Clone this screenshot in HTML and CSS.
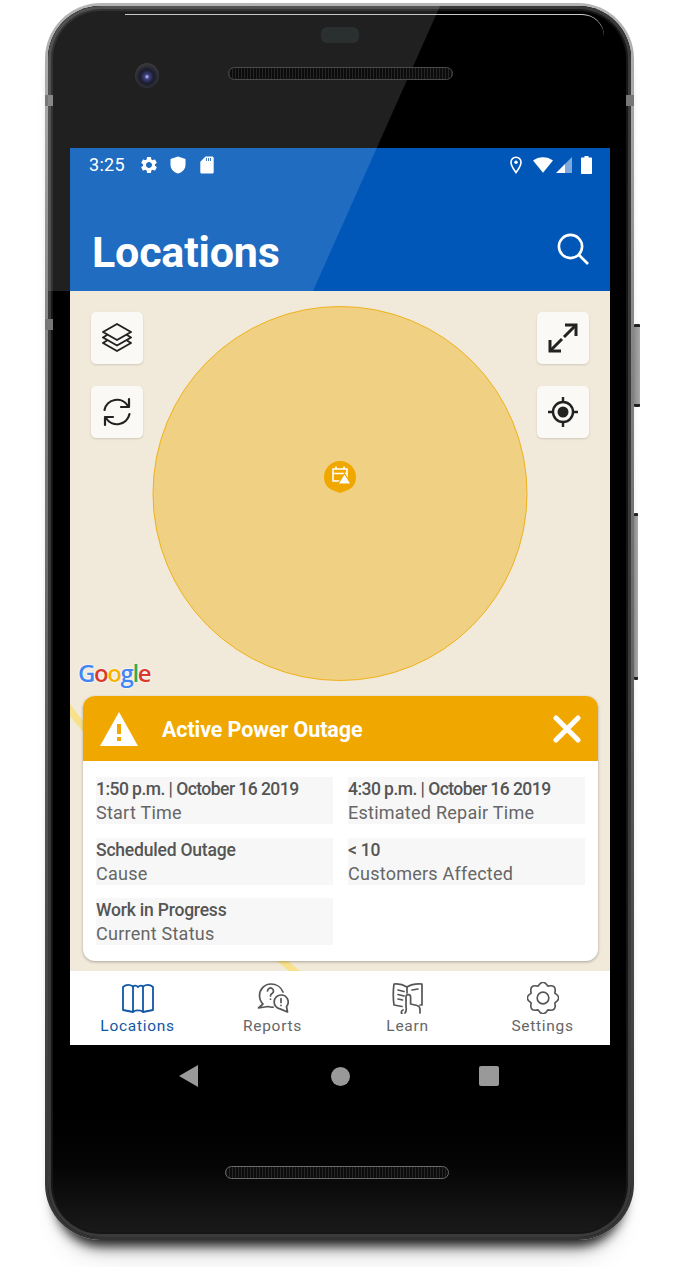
FILE: index.html
```html
<!DOCTYPE html>
<html lang="en">
<head>
  <meta charset="UTF-8">
  <title>Locations</title>
  <link rel="stylesheet" href="styles.css">
</head>
<body>
  <div class="phone">
    <span class="rocker rocker-volume"></span>
    <span class="rocker rocker-power"></span>
    <span class="band band-left"></span>
    <span class="band band-left-low"></span>
    <span class="band band-right"></span>
    <div class="glare"></div>
    <div class="top-line"></div>

    <div class="bezel-top">
      <div class="sensor"></div>
      <div class="bezel-row">
        <div class="camera"></div>
        <div class="speaker speaker-top"></div>
      </div>
    </div>

    <div class="screen">
      <div class="status">
        <span class="clock">3:25</span>
        <svg class="st-gear" viewBox="0 0 24 24"><path fill="#fff" d="M19.14 12.94c.04-.3.06-.61.06-.94 0-.32-.02-.64-.07-.94l2.03-1.58c.18-.14.23-.41.12-.61l-1.92-3.32c-.12-.22-.37-.29-.59-.22l-2.39.96c-.5-.38-1.03-.7-1.62-.94l-.36-2.54c-.04-.24-.24-.41-.48-.41h-3.84c-.24 0-.43.17-.47.41l-.36 2.54c-.59.24-1.13.57-1.62.94l-2.39-.96c-.22-.08-.47 0-.59.22L2.74 8.87c-.12.21-.08.47.12.61l2.03 1.58c-.05.3-.09.63-.09.94s.02.64.07.94l-2.03 1.58c-.18.14-.23.41-.12.61l1.92 3.32c.12.22.37.29.59.22l2.39-.96c.5.38 1.03.7 1.62.94l.36 2.54c.05.24.24.41.48.41h3.84c.24 0 .44-.17.47-.41l.36-2.54c.59-.24 1.13-.56 1.62-.94l2.39.96c.22.08.47 0 .59-.22l1.92-3.32c.12-.22.07-.47-.12-.61l-2.01-1.58zM12 15.6c-1.98 0-3.6-1.62-3.6-3.6s1.62-3.6 3.6-3.6 3.6 1.62 3.6 3.6-1.62 3.6-3.6 3.6z"/></svg>
        <svg class="st-shield" viewBox="0 0 16 18"><path fill="#fff" d="M8 0.5 L15.5 3 V8.5 C15.5 13 12.5 16.3 8 17.5 C3.5 16.3 0.5 13 0.5 8.5 V3 Z"/></svg>
        <svg class="st-sd" viewBox="0 0 14 18"><path fill="#fff" d="M5.5 0.5 H12 C13 0.5 13.7 1.2 13.7 2.2 V16 C13.7 17 13 17.6 12 17.6 H2 C1 17.6 0.3 17 0.3 16 V5.7 Z"/><path stroke="#1f6bc0" stroke-width="1" d="M6.5 2 V5 M8.5 2 V5 M10.5 2 V5"/></svg>
        <div class="status-right">
          <svg class="st-pin" viewBox="0 0 12 18"><path fill="none" stroke="#fff" stroke-width="1.6" d="M6 16.6 C3.5 13 1 10 1 6.2 A5 5 0 0 1 11 6.2 C11 10 8.5 13 6 16.6 Z"/><circle cx="6" cy="6.2" r="1.7" fill="#fff"/></svg>
          <svg class="st-wifi" viewBox="0 0 20 16"><path fill="#fff" d="M0 3.6 C5.6 -1 14.4 -1 20 3.6 L10 15.8 Z"/></svg>
          <svg class="st-signal" viewBox="0 0 16 16"><path fill="#fff" d="M0 16 L9 7 V16 Z"/><path fill="#7da9dc" d="M9 7 L16 0 V16 H9 Z"/></svg>
          <svg class="st-battery" viewBox="0 0 11 18"><path fill="#fff" d="M3.5 0 H7.5 V1.6 H10 C10.6 1.6 11 2 11 2.6 V17 C11 17.6 10.6 18 10 18 H1 C.4 18 0 17.6 0 17 V2.6 C0 2 .4 1.6 1 1.6 H3.5 Z"/></svg>
        </div>
      </div>

      <div class="appbar">
        <h1 class="title">Locations</h1>
        <svg class="search" viewBox="0 0 32 32" fill="none" stroke="#fff" stroke-width="2.6"><circle cx="13.5" cy="13.5" r="11.6"/><path d="M22 22 L31 31"/></svg>
      </div>

      <div class="map">
        <svg class="map-art" viewBox="0 0 540 680">
          <path fill="#f7e18a" d="M0 413 L13 430 V441 L0 425 Z"/>
          <path fill="#f7e18a" d="M207 670 H218 L230 680 H219 Z"/>
          <circle cx="270" cy="202.500" r="187" fill="#f0d082" stroke="#eeb21c" stroke-width="1"/>
          <path fill="#f0a800" d="M270 202 L262 199 C256 196 254 191 254 186 A16 16 0 0 1 286 186 C286 191 284 196 278 199 Z"/>
          <path fill="none" stroke="#fff" stroke-width="1.6" d="M263 178 H277 V190 H263 Z M263 182.500 H277 M266 175.500 V178 M274 175.500 V178"/>
          <path fill="#fff" stroke="#f0a800" stroke-width="1.2" d="M274.500 182.500 L281 193 H268 Z"/>
        </svg>

        <div class="map-tools">
          <div class="tool-col">
            <button class="tool">
              <svg viewBox="0 0 32 32" fill="none" stroke="#222" stroke-width="2" stroke-linejoin="round" stroke-linecap="round"><path d="M16 2 L30 10 L16 18 L2 10 Z"/><path d="M6 13 L2 15.500 L16 23.500 L30 15.500 L26 13"/><path d="M6 18.500 L2 21 L16 29 L30 21 L26 18.500"/></svg>
            </button>
            <button class="tool">
              <svg viewBox="0 0 32 32" fill="none" stroke="#222" stroke-width="2.200" stroke-linecap="round" stroke-linejoin="round"><path d="M3.500 14 A12.800 12.800 0 0 1 27 10"/><path d="M28 3 V11 H20"/><path d="M28.500 18 A12.800 12.800 0 0 1 5 22"/><path d="M4 29 V21 H12"/></svg>
            </button>
          </div>
          <div class="tool-col">
            <button class="tool">
              <svg viewBox="0 0 32 32" fill="none" stroke="#222" stroke-width="3"><path d="M18 3 H29 V14"/><path d="M29 3 L17 15"/><path d="M14 29 H3 V18"/><path d="M3 29 L15 17"/></svg>
            </button>
            <button class="tool">
              <svg viewBox="0 0 32 32" fill="none" stroke="#222" stroke-width="2.400"><circle cx="16" cy="16" r="10"/><circle cx="16" cy="16" r="5.500" fill="#222" stroke="none"/><path d="M16 1 V6 M16 26 V31 M1 16 H6 M26 16 H31"/></svg>
            </button>
          </div>
        </div>

        <div class="google"><span class="g-blue">G</span><span class="g-red">o</span><span class="g-yellow">o</span><span class="g-blue">g</span><span class="g-green">l</span><span class="g-red">e</span></div>

        <div class="card">
          <div class="card-head">
            <svg class="warn" viewBox="0 0 38 34"><path fill="#fff" d="M19 0 L38 34 H0 Z"/><path fill="#f0a800" d="M17 12 H21 V22 H17 Z M17 25 H21 V29 H17 Z"/></svg>
            <span class="card-title">Active Power Outage</span>
            <svg class="close" viewBox="0 0 28 28" fill="none" stroke="#fff" stroke-width="5" stroke-linecap="round"><path d="M3 3 L25 25 M25 3 L3 25"/></svg>
          </div>
          <div class="card-body">
            <div class="cell cell-date"><b>1:50 p.m. | October 16 2019</b><span>Start Time</span></div>
            <div class="cell cell-date"><b>4:30 p.m. | October 16 2019</b><span>Estimated Repair Time</span></div>
            <div class="cell"><b>Scheduled Outage</b><span>Cause</span></div>
            <div class="cell"><b>&lt; 10</b><span>Customers Affected</span></div>
            <div class="cell"><b>Work in Progress</b><span>Current Status</span></div>
          </div>
        </div>
      </div>

      <div class="tabs">
        <div class="tab active">
          <svg viewBox="0 0 32 32" fill="none" stroke="#0f57a5" stroke-width="1.800" stroke-linejoin="round"><path d="M1 5 C4 2.500 8 2.500 11 4.500 C13 3 14.500 3.500 16 5 C17.500 3.500 19 3 21 4.500 C24 2.500 28 2.500 31 5 V28 L21 30 C19 28.500 17.500 28 16 28.500 C14.500 28 13 28.500 11 30 L1 28 Z"/><path d="M11 4.500 V30 M21 4.500 V30"/></svg>
          <span>Locations</span>
        </div>
        <div class="tab">
          <svg viewBox="0 0 32 32" fill="none" stroke="#555" stroke-width="1.700" stroke-linecap="round" stroke-linejoin="round"><path d="M26 10 C24 5 19 2 14 2 C7 2 2.500 8 2.500 13.500 C2.500 17 4 20 6 22 L1.500 26 L11 24.500 C13 25.200 14.500 25.300 16 25.200"/><path d="M24 13 A7 7 0 0 0 23 26.900 L30.500 30 L29.500 24.500 A7 7 0 0 0 24 13 Z"/><path d="M10.500 9 A3 3 0 1 1 15 11.600 C14 12.200 13.500 12.800 13.500 14"/><path d="M13.500 17 V17.200"/><path d="M24 16.500 V20.500 M24 23.300 V23.500"/></svg>
          <span>Reports</span>
        </div>
        <div class="tab">
          <svg viewBox="0 0 32 32" fill="none" stroke="#555" stroke-width="1.700" stroke-linecap="round" stroke-linejoin="round"><path d="M15 5 C11 2.500 6 1.500 2 2 C1 9 1 16 2 23 L10 24.500"/><path d="M15 5 C19 2.500 25 1.500 30 2 V23 H28"/><path d="M15 5 V11"/><path d="M6 8 L12 9.500 M6 12.500 L12 14 M6 17 L10.500 18"/><path d="M20 8 L26 7"/><path d="M13 31 C14.500 29 14.500 27 14 25 V15 A2.300 2.300 0 0 1 18.600 15 V22 L25 23.500 C27 24 28 25.500 28 27.500 V31"/><path d="M11 28 C9 29 9 31 10 31.500"/></svg>
          <span>Learn</span>
        </div>
        <div class="tab">
          <svg viewBox="1 1 22 22" fill="none" stroke="#555" stroke-width="1.150" stroke-linejoin="round"><path d="M20.130 8.630 Q25.500 12 20.130 15.370 Q21.550 21.550 15.370 20.130 Q12 25.500 8.630 20.130 Q2.450 21.550 3.870 15.370 Q-1.500 12 3.870 8.630 Q2.450 2.450 8.630 3.870 Q12 -1.500 15.370 3.870 Q21.550 2.450 20.130 8.630 Z"/><circle cx="12" cy="12" r="4"/></svg>
          <span>Settings</span>
        </div>
      </div>
    </div>

    <div class="softkeys">
      <span class="key-back"></span>
      <span class="key-home"></span>
      <span class="key-recent"></span>
    </div>
    <div class="speaker speaker-bottom"></div>
  </div>
</body>
</html>
```

FILE: styles.css
```css
* {
  box-sizing: border-box;
}

body {
  margin: 0;
  background: #fff;
  font-family: Roboto, "Liberation Sans", sans-serif;
  overflow: hidden;
}

.phone {
  position: relative;
  width: 589px;
  height: 1237px;
  margin: 3px 0 27px 45px;
  border: 3px solid transparent;
  border-radius: 56px;
  background:
    linear-gradient(to top, #1b1b1b 0, #050505 70px, #000 120px) padding-box,
    linear-gradient(to bottom, #b5b5b5 0, #8a8a8a 300px, #555 800px, #333 1237px) border-box;
  box-shadow:
    inset 0 0 0 3px #3a3a3a,
    inset 0 0 0 5px #161616,
    0 16px 12px -10px rgba(0, 0, 0, .85),
    0 30px 30px -24px rgba(0, 0, 0, .3);
}

.glare {
  position: absolute;
  top: 0;
  left: 0;
  z-index: 1;
  width: 392px;
  height: 285px;
  border-top-left-radius: 53px;
  background: rgba(255, 255, 255, .125);
  clip-path: polygon(0 0, 100% 0, 265px 100%, 0 100%);
}

.top-line {
  position: absolute;
  top: 8px;
  left: 77px;
  z-index: 2;
  width: 479px;
  height: 22px;
  border-top: 1.5px solid #c8c8c8;
  border-top-right-radius: 34px;
}

.rocker {
  position: absolute;
  background: linear-gradient(to right, #8a8a8a, #aaa);
  border-top: 3px solid #222;
  border-bottom: 3px solid #222;
  border-radius: 1px;
}

.rocker-volume {
  top: 318px;
  right: -9px;
  width: 6px;
  height: 83px;
}

.rocker-power {
  top: 507px;
  right: -7px;
  width: 4px;
  height: 167px;
}

.band {
  position: absolute;
  width: 8px;
  height: 11px;
  background: #777;
}

.band-left {
  top: 89px;
  left: -3px;
}

.band-left-low {
  top: 313px;
  left: -3px;
}

.band-right {
  top: 89px;
  right: -3px;
}

/* top bezel */
.bezel-top {
  position: relative;
  z-index: 2;
  height: 142px;
  padding-top: 21px;
}

.sensor {
  width: 38px;
  height: 16px;
  margin: 0 auto;
  border-radius: 6px;
  background: #2a2f2f;
}

.bezel-row {
  display: flex;
  align-items: center;
  gap: 69px;
  margin: 20px 0 0 87px;
}

.camera {
  width: 24px;
  height: 25px;
  border-radius: 50%;
  background: radial-gradient(circle at 50% 55%, #c9c9ff 0, #3c3f7e 14%, #1b1c2c 38%, #3b3b3d 72%, #2b2b2b 100%);
}

.speaker {
  height: 13px;
  border: 1px solid #4a4a4a;
  border-radius: 7px;
  background: repeating-linear-gradient(90deg, #262626 0 1px, #0c0c0c 1px 3px);
}

.speaker-top {
  width: 225px;
  margin-bottom: 4px;
}

.speaker-bottom {
  width: 224px;
  margin: 59px 0 0 177px;
  border-color: #6a6a6a;
}

/* screen */
.screen {
  display: flex;
  flex-direction: column;
  width: 540px;
  height: 897px;
  margin-left: 22px;
  background: #0057b8;
}

.status {
  display: flex;
  align-items: center;
  height: 33px;
  padding: 0 18px 0 19px;
}

.clock {
  margin-right: 14px;
  color: #fff;
  font-size: 18px;
  letter-spacing: .3px;
}

.st-gear {
  width: 20px;
  height: 20px;
  margin-right: 11px;
}

.st-shield {
  width: 16px;
  height: 18px;
  margin-right: 14px;
}

.st-sd {
  width: 14px;
  height: 18px;
}

.status-right {
  display: flex;
  align-items: center;
  margin-left: auto;
}

.st-pin {
  width: 12px;
  height: 18px;
  margin-right: 11px;
}

.st-wifi {
  width: 20px;
  height: 16px;
  margin-right: 3px;
}

.st-signal {
  width: 16px;
  height: 16px;
  margin-right: 9px;
}

.st-battery {
  width: 11px;
  height: 18px;
}

.appbar {
  display: flex;
  align-items: center;
  justify-content: space-between;
  height: 110px;
  padding: 28px 21px 0 22px;
}

.title {
  margin: 4px 0 0;
  color: #fff;
  font-size: 43px;
  font-weight: 700;
  letter-spacing: -.2px;
}

.search {
  width: 32px;
  height: 32px;
  margin-bottom: 2px;
}

/* map */
.map {
  position: relative;
  z-index: 2;
  height: 680px;
  background: #f1e9d9;
}

.map-art {
  position: absolute;
  top: 0;
  left: 0;
  width: 540px;
  height: 680px;
}

.map-tools {
  position: absolute;
  top: 21px;
  left: 21px;
  right: 21px;
  display: flex;
  justify-content: space-between;
}

.tool-col {
  display: flex;
  flex-direction: column;
  gap: 22px;
}

.tool {
  display: flex;
  align-items: center;
  justify-content: center;
  width: 52px;
  height: 52px;
  padding: 0;
  border: 0;
  border-radius: 5px;
  background: #fbf9f6;
  box-shadow: 0 1px 2px rgba(120, 110, 90, .25);
}

.tool svg {
  width: 32px;
  height: 32px;
}

.google {
  position: absolute;
  top: 366px;
  left: 8px;
  font-family: "Open Sans", sans-serif;
  font-size: 24px;
  font-weight: 600;
  letter-spacing: -1.4px;
  line-height: 32px;
  text-shadow: 0 0 2px #fff, 0 0 2px #fff;
}

.g-blue { color: #4285f4; }
.g-red { color: #d9392b; }
.g-yellow { color: #f4b400; }
.g-green { color: #34a853; }

.card {
  position: absolute;
  top: 405px;
  left: 13px;
  width: 514.5px;
  height: 265px;
  border-radius: 12px;
  background: #fff;
  box-shadow: 0 1px 3px rgba(0, 0, 0, .3);
  overflow: hidden;
}

.card-head {
  display: flex;
  align-items: center;
  height: 65px;
  padding: 0 17px 0 17px;
  background: #f0a800;
}

.warn {
  width: 38px;
  height: 34px;
  margin-right: 24px;
}

.card-title {
  padding-top: 2px;
  color: #fff;
  font-size: 21.5px;
  font-weight: 700;
  letter-spacing: -.1px;
}

.close {
  width: 28px;
  height: 28px;
  margin-left: auto;
}

.card-body {
  display: grid;
  grid-template-columns: 237px 237px;
  gap: 13.5px 15px;
  padding: 16px 13px;
}

.cell {
  display: flex;
  flex-direction: column;
  height: 47px;
  background: #f7f7f7;
  color: #666;
  font-size: 18px;
  letter-spacing: .25px;
  line-height: 24px;
}

.cell b {
  color: #555;
  font-size: 17.5px;
  font-weight: 500;
  letter-spacing: -.2px;
}

.cell-date b {
  letter-spacing: -.54px;
}

/* bottom tabs */
.tabs {
  position: relative;
  z-index: 2;
  display: flex;
  height: 74px;
  background: #fff;
}

.tab {
  display: flex;
  flex-direction: column;
  align-items: center;
  flex: 1;
  padding-top: 11px;
  color: #666;
  font-size: 15.5px;
  letter-spacing: .7px;
  line-height: 18px;
}

.tab svg {
  width: 32px;
  height: 32px;
  margin-bottom: 3px;
}

.tab.active {
  color: #0f57a5;
}

/* android keys */
.softkeys {
  display: flex;
  align-items: center;
  justify-content: center;
  gap: 131px;
  width: 540px;
  height: 62px;
  margin-left: 21px;
}

.key-back {
  width: 19px;
  height: 22px;
  margin-right: 2px;
  background: #999;
  clip-path: polygon(100% 0, 100% 100%, 0 50%);
}

.key-home {
  width: 19px;
  height: 19px;
  margin-right: -2px;
  border-radius: 50%;
  background: #999;
}

.key-recent {
  width: 20px;
  height: 20px;
  border-radius: 2px;
  background: #999;
}
```
